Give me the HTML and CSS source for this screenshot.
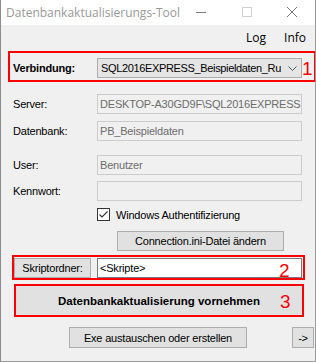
FILE: index.html
```html
<!DOCTYPE html>
<html>
<head>
<meta charset="utf-8">
<link rel="stylesheet" href="styles.css">
</head>
<body>
<div class="win">
  <div class="titlebar">
    <span class="title">Datenbankaktualisierungs-Tool</span>
    <svg class="tb-icons" width="316" height="25" viewBox="0 0 316 25">
      <line x1="196" y1="12.5" x2="206" y2="12.5" stroke="#7a7a7a" stroke-width="1"/>
      <rect x="242.5" y="7.5" width="9" height="9" fill="none" stroke="#d0d0d0" stroke-width="1"/>
      <path d="M287 7 L297 17 M297 7 L287 17" stroke="#777" stroke-width="1" fill="none"/>
    </svg>
  </div>
  <div class="menubar">
    <span class="menu-item">Log</span>
    <span class="menu-item">Info</span>
  </div>
  <div class="content">
    <div class="redbox box1">
      <span class="lbl bold">Verbindung:</span>
      <div class="combo">
        <span class="combo-text">SQL2016EXPRESS_Beispieldaten_Ru</span>
        <svg class="chev" width="9" height="5" viewBox="0 0 9 5"><path d="M0.5 0.5 L4.5 4.5 L8.5 0.5" stroke="#555" fill="none" stroke-width="1"/></svg>
      </div>
      <span class="num n1">1</span>
    </div>
    <div class="row r-server"><span class="lbl">Server:</span><div class="field dis">DESKTOP-A30GD9F\SQL2016EXPRESS</div></div>
    <div class="row r-db"><span class="lbl">Datenbank:</span><div class="field dis">PB_Beispieldaten</div></div>
    <div class="row r-user"><span class="lbl">User:</span><div class="field dis">Benutzer</div></div>
    <div class="row r-pw"><span class="lbl">Kennwort:</span><div class="field dis"></div></div>
    <div class="row r-chk">
      <span class="lbl"></span>
      <span class="checkbox"><svg width="11" height="11" viewBox="0 0 11 11"><path d="M1.5 5.5 L4 8 L9.5 2.5" stroke="#333" fill="none" stroke-width="1.1"/></svg></span>
      <span class="chk-label">Windows Authentifizierung</span>
    </div>
    <div class="row r-conn"><button class="btn btn-conn">Connection.ini-Datei ändern</button></div>
    <div class="redbox box2">
      <button class="btn btn-skript">Skriptordner:</button>
      <div class="field white">&lt;Skripte&gt;</div>
      <span class="num n2">2</span>
    </div>
    <div class="redbox box3">
      <span class="bold big">Datenbankaktualisierung vornehmen</span>
      <span class="num n3">3</span>
    </div>
    <div class="row r-bottom">
      <button class="btn btn-exe">Exe austauschen oder erstellen</button>
      <button class="btn btn-arrow">-&gt;</button>
    </div>
  </div>
</div>
</body>
</html>
```

FILE: styles.css
```css
html, body {
  margin: 0;
  padding: 0;
  background: #f0f0f0;
}
.win {
  width: 316px;
  height: 362px;
  box-sizing: border-box;
  border-left: 1px solid #8c8c8c;
  border-right: 1px solid #9a9a9a;
  border-bottom: 1px solid #9a9a9a;
  background: #f0f0f0;
  font-family: "Liberation Sans", Arial, sans-serif;
  font-size: 11px;
  letter-spacing: -0.2px;
  color: #000;
  overflow: hidden;
  white-space: nowrap;
}
.titlebar {
  position: relative;
  height: 25px;
  background: #fff;
}
.title {
  position: absolute;
  left: 5px;
  top: 4px;
  font-family: "Open Sans", "Noto Sans", sans-serif;
  font-size: 12px;
  letter-spacing: 0;
  color: #999;
}
.tb-icons {
  position: absolute;
  left: -1px;
  top: 0;
}
.menubar {
  height: 24px;
  display: flex;
  justify-content: flex-end;
  align-items: center;
  gap: 18px;
  padding-right: 9px;
  font-family: "Open Sans", "Noto Sans", sans-serif;
  font-size: 12px;
  letter-spacing: 0;
}
.content {
  padding-top: 2px;
  display: flex;
  flex-direction: column;
}
.redbox {
  position: relative;
  border: 2px solid #f00;
  box-sizing: border-box;
  display: flex;
  align-items: center;
}
.box1 {
  margin-left: 7px;
  width: 308px;
  height: 31px;
  padding: 3px 0 0 3px;
}
.lbl {
  width: 84px;
  flex: none;
}
.bold {
  font-weight: bold;
}
.big {
  font-size: 11.5px;
  letter-spacing: 0;
}
.combo {
  width: 205px;
  height: 20px;
  box-sizing: border-box;
  background: #e5e5e5;
  border: 1px solid #acacac;
  display: flex;
  align-items: center;
  justify-content: space-between;
  padding: 0 4px 0 3px;
  overflow: hidden;
}
.combo-text {
  overflow: hidden;
  letter-spacing: -0.35px;
}
.chev {
  display: block;
  flex: none;
}
.num {
  position: absolute;
  color: #f00;
  font-size: 19px;
  font-family: "Liberation Sans", Arial, sans-serif;
  letter-spacing: 0;
  line-height: 1;
}
.n1 { left: 292px; top: 6px; }
.n2 { left: 265px; top: 4px; }
.n3 { left: 264px; top: 6px; }
.row {
  display: flex;
  align-items: center;
  padding-left: 12px;
}
.field {
  width: 205px;
  height: 20px;
  box-sizing: border-box;
  border: 1px solid #ccc;
  display: flex;
  align-items: center;
  padding-left: 2px;
  overflow: hidden;
}
.field.dis {
  background: #f0f0f0;
  color: #6d6d6d;
}
.field.white {
  background: #fff;
  border-color: #7a7a7a;
  color: #000;
}
.r-server { margin-top: 12px; }
.r-db { margin-top: 7px; }
.r-user { margin-top: 14px; }
.r-pw { margin-top: 6px; }
.r-chk { margin-top: 7px; height: 13px; }
.checkbox {
  width: 13px;
  height: 13px;
  box-sizing: border-box;
  border: 1px solid #333;
  background: #fff;
  display: flex;
  align-items: center;
  justify-content: center;
}
.checkbox svg { display: block; }
.chk-label {
  margin-left: 6px;
}
.btn {
  font-family: "Liberation Sans", Arial, sans-serif;
  font-size: 11px;
  letter-spacing: -0.2px;
  background: #e1e1e1;
  border: 1px solid #adadad;
  box-sizing: border-box;
  height: 20px;
  padding: 0;
  margin: 0;
  color: #000;
}
.r-conn { margin-top: 10px; padding-left: 116px; }
.btn-conn { width: 167px; }
.box2 {
  margin-top: 4px;
  margin-left: 11px;
  width: 293px;
  height: 25px;
  padding-left: 0;
}
.btn-skript {
  width: 77px;
  margin-right: 6px;
}
.box3 {
  margin-top: 4px;
  margin-left: 13px;
  width: 290px;
  height: 33px;
  background: #e1e1e1;
  justify-content: center;
}
.r-bottom {
  margin-top: 10px;
  padding-left: 68px;
}
.btn-exe { width: 178px; height: 21px; }
.btn-arrow { width: 22px; height: 21px; margin-left: 45px; }
```
